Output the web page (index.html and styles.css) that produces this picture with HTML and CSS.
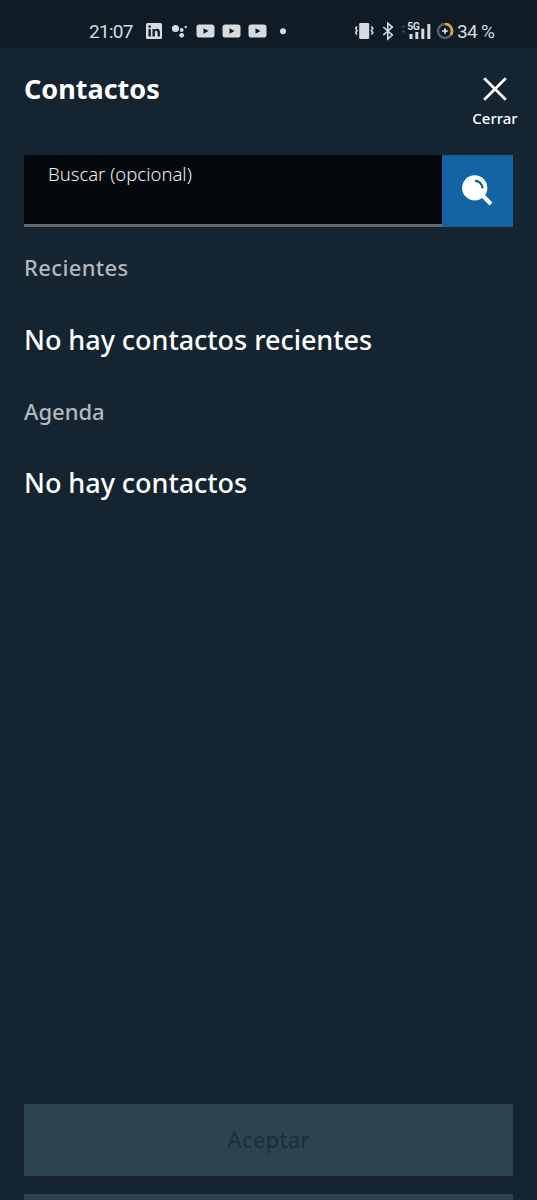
FILE: index.html
```html
<!DOCTYPE html>
<html lang="es">
<head>
<meta charset="utf-8">
<title>Contactos</title>
<link rel="stylesheet" href="styles.css">
</head>
<body>
<div class="status">
  <span class="clock">21:07</span>
  <svg class="status-left" width="146" height="24" viewBox="0 0 146 24" fill="#d5dbdf">
    <rect x="1" y="4" width="16" height="16" rx="1.5"/>
    <g fill="#0f1c26"><rect x="3.5" y="10" width="2.3" height="7.5"/><circle cx="4.65" cy="7.6" r="1.3"/><path d="M7.5 10h2.1v1.1c1.3-2 5.3-1.7 5.3 1.7v4.7h-2.3v-4.1c0-2.2-2.8-2-2.8 0v4.1H7.5z"/></g>
    <circle cx="30.5" cy="9.5" r="3.6"/><circle cx="36.7" cy="11" r="1.9"/><circle cx="36.7" cy="16.3" r="2.4"/><circle cx="40.7" cy="8" r="1.2"/>
    <g id="video"><rect x="51.5" y="5.5" width="18" height="13" rx="2.8"/><path d="M58.5 9.2v5.6l5-2.8z" fill="#0f1c26"/></g>
    <use href="#video" x="26"/><use href="#video" x="52"/>
    <circle cx="138" cy="12.2" r="3"/>
  </svg>
  <svg class="status-right" width="102" height="24" viewBox="0 0 102 24" fill="#d5dbdf">
    <rect x="4.2" y="4" width="10" height="16" rx="1.2"/>
    <path d="M2 7.5l-1.4 2 1.4 2-1.4 2 1.4 2M16.4 7.5l1.4 2-1.4 2 1.4 2-1.4 2" fill="none" stroke="#d5dbdf" stroke-width="1.6"/>
    <path d="M28.3 8l9 8-4.5 4V4.3l4.5 3.8-9 8" fill="none" stroke="#d5dbdf" stroke-width="1.6"/>
    <path d="M46.8 8.7l1.7-2 1.7 2M46.8 11.3l1.7 2 1.7-2" fill="none" stroke="#3b4852" stroke-width="1.2"/>
    <rect x="54.5" y="15" width="3" height="5"/><rect x="60.3" y="13" width="3" height="7"/><rect x="66.3" y="9.7" width="3" height="10.3"/><rect x="72.3" y="5" width="3" height="15"/>
    <text x="52.3" y="11.3" class="network">5G</text>
    <circle cx="90" cy="12" r="7" fill="none" stroke="#54616b" stroke-width="2.5"/>
    <path d="M90 5a7 7 0 0 1 5.8 11" fill="none" stroke="#e1a827" stroke-width="2.5"/>
    <path d="M90 9.2v5.6M87.2 12h5.6" stroke="#e3e7e9" stroke-width="1.7"/>
  </svg>
  <span class="battery">34 %</span>
</div>
<main class="screen">
  <header class="header">
    <h1 class="title">Contactos</h1>
    <button class="close">
      <svg width="24" height="24" viewBox="0 0 24 24"><path d="M1.2 1.2l21.6 21.6M22.8 1.2L1.2 22.8" stroke="#fff" stroke-width="2.7"/></svg>
      <span class="close-label">Cerrar</span>
    </button>
  </header>
  <div class="search">
    <div class="field"><span class="field-label">Buscar (opcional)</span></div>
    <button class="search-button" aria-label="Buscar">
      <svg width="32" height="32" viewBox="0 0 32 32"><circle cx="12.7" cy="12.9" r="12.6" fill="#fff"/><path d="M20 20l9 9" stroke="#fff" stroke-width="4"/><path d="M13 5.8a7.5 7.5 0 0 1 7.5 7.5" fill="none" stroke="#1464a5" stroke-width="2.4"/></svg>
    </button>
  </div>
  <h2 class="section section-recent">Recientes</h2>
  <p class="empty empty-recent">No hay contactos recientes</p>
  <h2 class="section section-agenda">Agenda</h2>
  <p class="empty empty-agenda">No hay contactos</p>
  <footer class="actions">
    <button class="accept"><span class="accept-label">Aceptar</span></button>
    <div class="next-action"></div>
  </footer>
</main>
</body>
</html>
```
FILE: styles.css
```css
* { box-sizing: border-box; }
body {
  margin: 0;
  height: 1200px;
  overflow: hidden;
  display: flex;
  flex-direction: column;
  background: #142430;
  color: #fff;
  font-family: "Noto Sans", "Liberation Sans", sans-serif;
}
button { border: 0; padding: 0; background: none; color: inherit; font-family: inherit; }
h1, h2, p { margin: 0; }
.status {
  flex: none;
  height: 48px;
  padding: 14px 0 0 89px;
  display: flex;
  align-items: center;
  background: #0f1c26;
  color: #d5dbdf;
  font-family: Roboto, sans-serif;
}
.clock { width: 55px; font-size: 19px; letter-spacing: -0.7px; white-space: nowrap; }
.status-left { margin-left: 1px; }
.status-right { margin-left: 64px; }
.battery { font-size: 19px; letter-spacing: -0.7px; white-space: nowrap; }
.network { font: bold 10.5px Roboto, sans-serif; letter-spacing: -0.5px; }
.screen { flex: 1; padding: 0 24px; display: flex; flex-direction: column; }
.header { height: 107px; display: flex; justify-content: space-between; align-items: flex-start; }
.title { margin-top: 25px; font-size: 27px; line-height: 32px; font-weight: 700; }
.close { width: 46px; margin: 29px -5px 0 0; display: flex; flex-direction: column; align-items: center; gap: 8px; }
.close-label { font-size: 15px; line-height: 18px; font-weight: 500; white-space: nowrap; }
.search { display: flex; height: 72px; }
.field { flex: 1; padding: 7px 24px; background: #05090d; border-bottom: 3px solid #68696b; }
.field-label { display: block; font-size: 18.5px; line-height: 24px; font-weight: 300; color: #eceeef; }
.search-button { width: 71px; display: grid; place-items: center; background: #1464a5; }
.section { font-size: 22px; line-height: 28px; font-weight: 500; color: #b3b8bc; }
.section-recent { margin-top: 26px; letter-spacing: 0.35px; }
.section-agenda { margin-top: 41px; }
.empty { margin-top: 43px; font-size: 27px; line-height: 32px; font-weight: 500; letter-spacing: -0.04px; }
.empty-agenda { margin-top: 42px; }
.actions { margin-top: auto; height: 96px; display: flex; flex-direction: column; gap: 18px; }
.accept { height: 72px; flex: none; padding-bottom: 2px; border-radius: 1px; background: #2e4351; color: #1b3040; }
.accept-label { font-size: 22px; font-weight: 500; letter-spacing: 0.1px; }
.next-action { height: 6px; background: #2e4351; }
```
